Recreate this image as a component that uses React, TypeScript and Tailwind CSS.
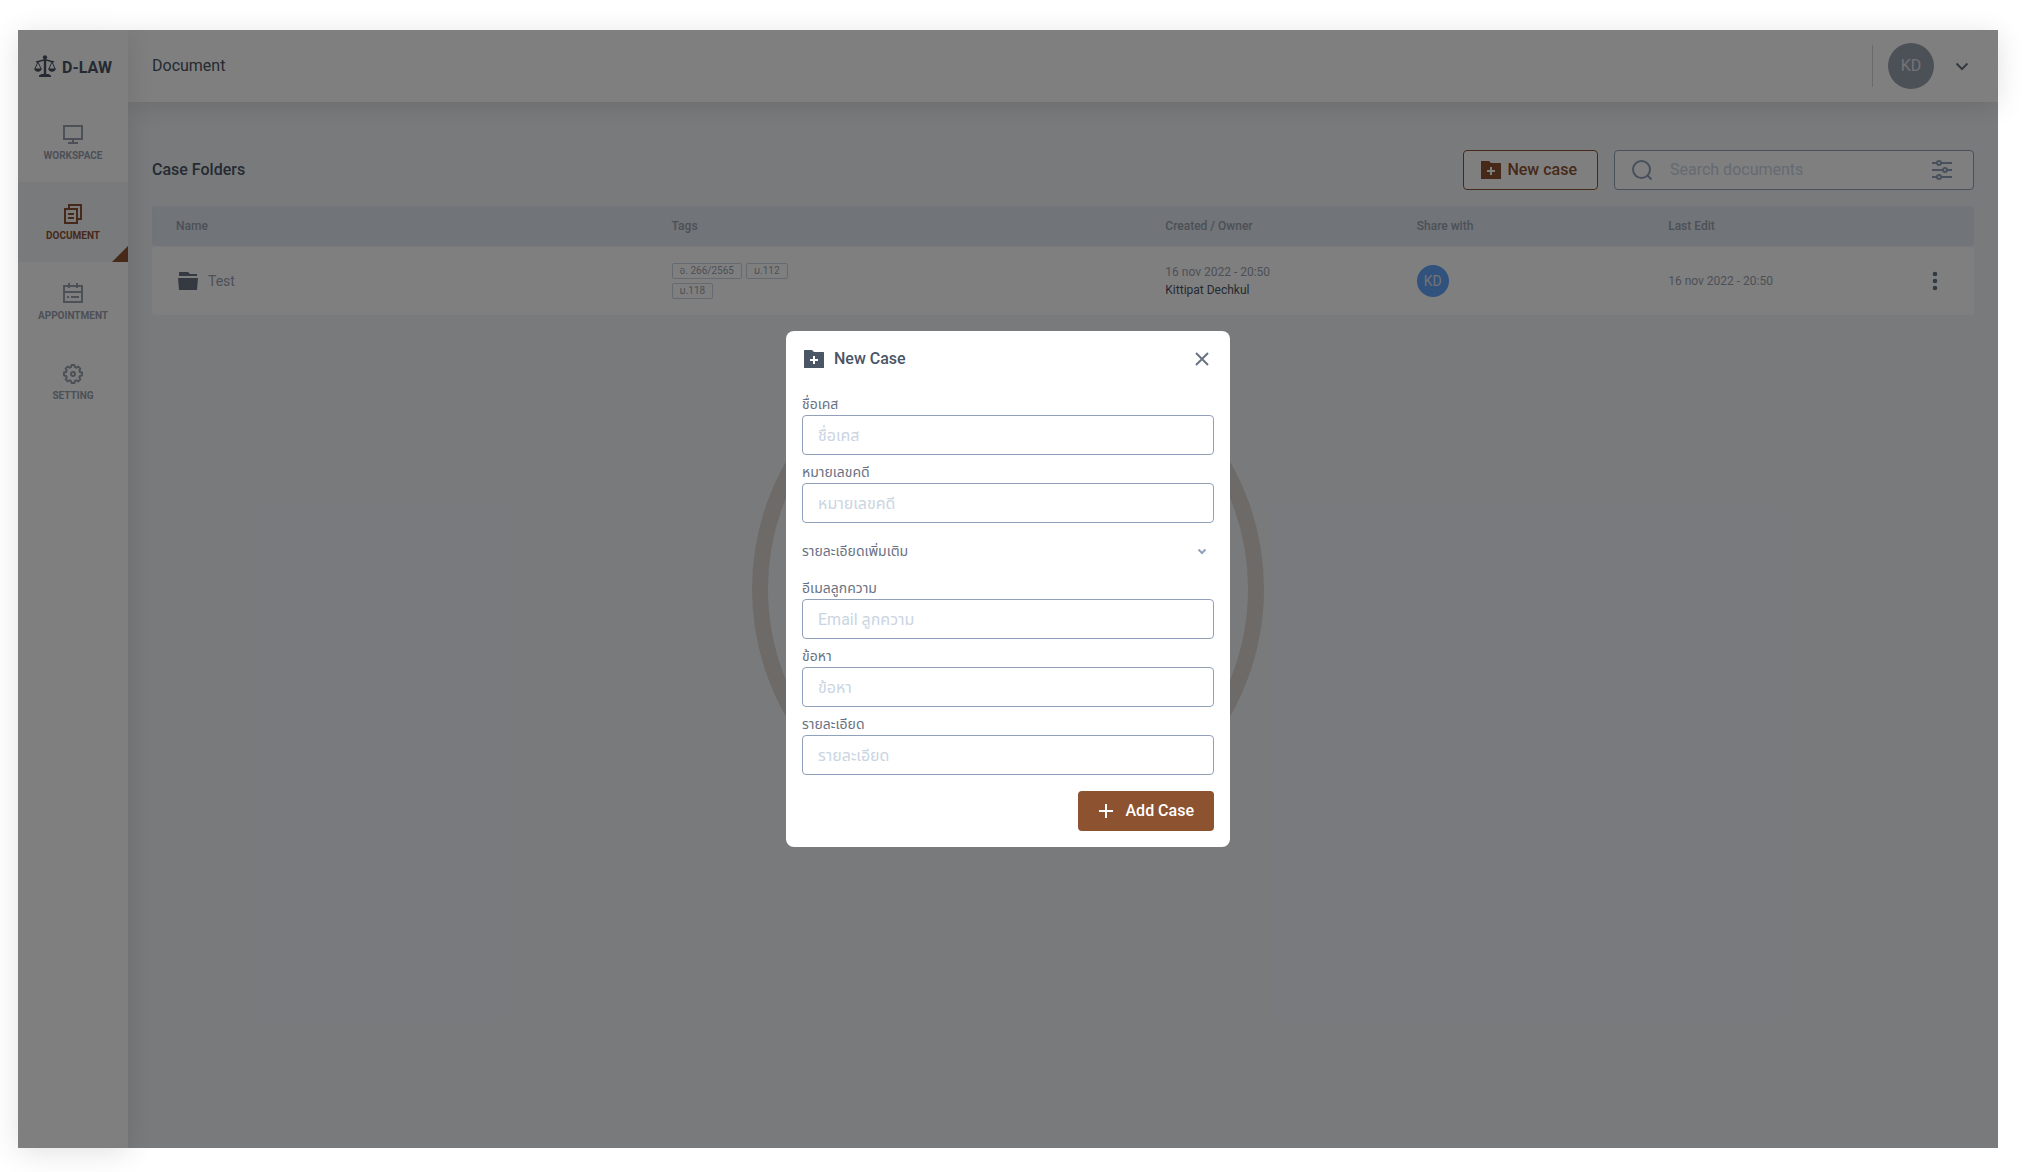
import React from "react";

const font = "font-[Roboto,'Noto_Sans','Noto_Sans_Thai',sans-serif]";

function Icon({ children, className = "" }: { children: React.ReactNode; className?: string }) {
  return (
    <svg width="24" height="24" viewBox="0 0 24 24" fill="none" stroke="currentColor" strokeWidth="2" className={className} aria-hidden="true">
      {children}
    </svg>
  );
}

function ScalesLogo() {
  return (
    <svg width="22" height="22" viewBox="0 0 22 22" fill="none" stroke="currentColor" aria-hidden="true">
      <circle cx="11" cy="2.3" r="2.1" fill="currentColor" stroke="none" />
      <path d="M11 4v15" strokeWidth="2.4" />
      <path d="M2 6.6c3 .6 5-1.6 9-1.6s6 2.2 9 1.6" strokeWidth="1.4" />
      <path d="M4 6.8.9 14M4 6.8 7.1 14M18 6.8 14.9 14M18 6.8l3.1 7.2" strokeWidth="1" />
      <path d="M0 13.6h8c-.4 2-1.9 3.2-4 3.2s-3.600-1.200-4-3.200zM14 13.600h8c-.4 2-1.900 3.200-4 3.200s-3.600-1.200-4-3.200z" fill="currentColor" stroke="none" />
      <path d="M7.500 19h7l2.500 1.600v1.400H5v-1.400z" fill="currentColor" stroke="none" />
    </svg>
  );
}

const gearPath = (() => {
  const points: string[] = [];
  for (let tooth = 0; tooth < 8; tooth++) {
    const base = tooth * 45 - 90;
    const corners: [number, number][] = [[-16, 7.2], [-9, 9.1], [9, 9.1], [16, 7.2]];
    for (const [offset, radius] of corners) {
      const a = ((base + offset) * Math.PI) / 180;
      points.push(`${(12 + radius * Math.cos(a)).toFixed(2)} ${(12 + radius * Math.sin(a)).toFixed(2)}`);
    }
  }
  return `M${points.join("L")}Z`;
})();

const WorkspaceIcon = () => (
  <Icon><path d="M3 4h18v13H3zM12 17v4M7 21h10" /></Icon>
);
const DocumentIcon = () => (
  <Icon><path d="M4 7h12v14H4zM8 7V3h12v14h-4M7 12h6M7 16h6" /></Icon>
);
const AppointmentIcon = () => (
  <Icon><path d="M3 4h18v16H3zM3 10h18M8 1v5M16 1v5M6 15h2M10 15h8" /></Icon>
);
const SettingIcon = () => (
  <Icon>
    <circle cx="12" cy="12" r="2" />
    <path d={gearPath} strokeLinejoin="round" />
  </Icon>
);
const FolderPlusIcon = () => (
  <svg width="24" height="24" viewBox="0 0 24 24" aria-hidden="true" fill="currentColor">
    <path fillRule="evenodd" d="M2 3.500a.5.5 0 0 1 .5-.5H10l2 2h9.500a.5.5 0 0 1 .5.5v15a.5.5 0 0 1-.5.5h-19a.5.5 0 0 1-.5-.5zM11 9v3H8v2h3v3h2v-3h3v-2h-3V9z" />
  </svg>
);

const nav = [
  { label: "WORKSPACE", icon: <WorkspaceIcon />, active: false },
  { label: "DOCUMENT", icon: <DocumentIcon />, active: true },
  { label: "APPOINTMENT", icon: <AppointmentIcon />, active: false },
  { label: "SETTING", icon: <SettingIcon />, active: false },
];

function Sidebar() {
  return (
    <aside className="relative z-10 flex w-[110px] shrink-0 flex-col bg-white shadow-[0_4px_28px_rgba(0,0,0,0.12)]">
      <div className="flex h-[72px] items-center justify-center text-gray-600">
        <div className="flex items-end gap-1.5">
          <ScalesLogo />
          <span className="text-base leading-[18px] font-bold">D-LAW</span>
        </div>
      </div>
      <nav className="flex flex-col">
        {nav.map((item) => (
          <a
            key={item.label}
            href="#"
            aria-current={item.active ? "page" : undefined}
            className={
              item.active
                ? "relative flex h-20 flex-col items-center gap-0.5 bg-slate-100 pt-5 text-[10px] leading-4 font-bold text-[#8d5331]"
                : "relative flex h-20 flex-col items-center gap-0.5 pt-5 text-[10px] leading-4 font-bold text-gray-400"
            }
          >
            {item.icon}
            {item.label}
            {item.active && (
              <svg className="absolute right-0 bottom-0" width="16" height="16" aria-hidden="true">
                <path d="M16 0v16H0z" fill="currentColor" />
              </svg>
            )}
          </a>
        ))}
      </nav>
    </aside>
  );
}

function Header() {
  return (
    <header className="flex h-[72px] items-center justify-between bg-white px-6 shadow-[0_4px_28px_rgba(0,0,0,0.12)]">
      <h1 className="text-base text-gray-600">Document</h1>
      <div className="flex items-center">
        <div className="h-[42px] w-px bg-gray-300" />
        <button type="button" className="ml-[15px] flex items-center gap-4 text-gray-500" aria-label="Account menu">
          <span className="flex size-[46px] items-center justify-center rounded-full bg-gray-400 text-base text-gray-200">KD</span>
          <Icon><path d="m6.500 9.500 5.500 5.500 5.500-5.500" /></Icon>
        </button>
      </div>
    </header>
  );
}

function Toolbar() {
  return (
    <div className="mb-[15px] flex items-center justify-between">
      <h2 className="text-base font-medium text-gray-600">Case Folders</h2>
      <div className="flex gap-4">
        <button type="button" className="flex h-10 items-center gap-1 rounded border border-[#8d5331] bg-white pr-5 pl-[15px] text-base font-medium text-[#8d5331]">
          <FolderPlusIcon />
          New case
        </button>
        <div className="flex h-10 w-[360px] items-center gap-4 rounded border border-slate-400 bg-white pr-[19px] pl-[15px] text-slate-400">
          <Icon className="shrink-0"><circle cx="11.500" cy="11.500" r="8.500" /><path d="m17.500 17.500 4 4" /></Icon>
          <input type="search" aria-label="Search documents" placeholder="Search documents" className="min-w-0 grow text-base outline-none placeholder:text-slate-300" />
          <button type="button" aria-label="Filter">
            <Icon>
              <path d="M2 5h5M11 5h11M2 12h11M17 12h5M2 19h5M11 19h11" />
              <circle cx="9" cy="5" r="2" />
              <circle cx="15" cy="12" r="2" />
              <circle cx="9" cy="19" r="2" />
            </Icon>
          </button>
        </div>
      </div>
    </div>
  );
}

function CaseTable() {
  return (
    <table className="w-full table-fixed border-separate border-spacing-x-0 border-spacing-y-px">
      <colgroup>
        <col className="w-[27.2%]" />
        <col className="w-[27.1%]" />
        <col className="w-[13.8%]" />
        <col className="w-[13.8%]" />
        <col />
      </colgroup>
      <thead>
        <tr className="bg-slate-200 text-left text-xs text-gray-400">
          <th className="h-10 rounded-l pl-6 font-medium">Name</th>
          <th className="h-10 pl-6 font-medium">Tags</th>
          <th className="h-10 pl-6 font-medium">Created / Owner</th>
          <th className="h-10 pl-6 font-medium">Share with</th>
          <th className="h-10 rounded-r pl-6 font-medium">Last Edit</th>
        </tr>
      </thead>
      <tbody>
        <tr className="bg-white text-xs text-gray-400">
          <td className="h-[68px] rounded-l pl-6">
            <div className="flex items-center gap-2">
              <svg className="text-gray-500" width="24" height="24" viewBox="0 0 24 24" fill="currentColor" aria-hidden="true">
                <path d="M3 3h9l2 2h7v2H3zM2 9h20l-1 12H3z" />
              </svg>
              <span className="text-sm">Test</span>
            </div>
          </td>
          <td className="pl-6">
            <div className="flex w-[120px] flex-wrap gap-1 text-[10px] leading-3.5">
              {["อ. 266/2565", "ม.112", "ม.118"].map((t) => (
                <span key={t} className="rounded-xs border border-slate-300 px-[7px]">{t}</span>
              ))}
            </div>
          </td>
          <td className="pl-6 leading-[18px]">
            <div>16 nov 2022 - 20:50</div>
            <div className="text-gray-600">Kittipat Dechkul</div>
          </td>
          <td className="pl-6">
            <span className="flex size-8 items-center justify-center rounded-full bg-[#60a5fa] text-sm text-gray-200">KD</span>
          </td>
          <td className="rounded-r pr-6 pl-6">
            <div className="flex items-center justify-between">
              16 nov 2022 - 20:50
              <button type="button" aria-label="More actions" className="text-slate-500">
                <svg width="30" height="24" viewBox="0 0 30 24" fill="currentColor" aria-hidden="true">
                  <circle cx="15" cy="5" r="2.300" />
                  <circle cx="15" cy="12" r="2.300" />
                  <circle cx="15" cy="19" r="2.300" />
                </svg>
              </button>
            </div>
          </td>
        </tr>
      </tbody>
    </table>
  );
}

function Field({ id, label, placeholder }: { id: string; label: string; placeholder: string }) {
  return (
    <div className="flex flex-col">
      <label htmlFor={id} className="h-5 text-sm leading-[18px] text-gray-500">{label}</label>
      <input id={id} placeholder={placeholder} className="h-10 w-full rounded border border-slate-400 px-[15px] text-base placeholder:text-slate-300" />
    </div>
  );
}

function NewCaseDialog() {
  return (
    <form role="dialog" aria-label="New Case" className="flex w-[444px] flex-col gap-2 rounded-lg bg-white p-4">
      <div className="mb-4 flex h-6 items-center justify-between text-gray-600">
        <div className="flex items-center gap-2">
          <FolderPlusIcon />
          <h2 className="text-base font-medium">New Case</h2>
        </div>
        <button type="button" aria-label="Close" className="text-gray-500">
          <Icon><path d="m6 6 12 12M18 6 6 18" /></Icon>
        </button>
      </div>
      <Field id="name" label="ชื่อเคส" placeholder="ชื่อเคส" />
      <Field id="number" label="หมายเลขคดี" placeholder="หมายเลขคดี" />
      <button type="button" aria-expanded="true" className="flex h-10 items-center justify-between text-sm text-gray-500">
        รายละเอียดเพิ่มเติม
        <Icon className="text-slate-400"><path d="m8.500 10.500 3.500 3.500 3.500-3.500" /></Icon>
      </button>
      <Field id="email" label="อีเมลลูกความ" placeholder="Email ลูกความ" />
      <Field id="charge" label="ข้อหา" placeholder="ข้อหา" />
      <Field id="detail" label="รายละเอียด" placeholder="รายละเอียด" />
      <button type="submit" className="mt-2 flex h-10 items-center gap-2 self-end rounded bg-[#8d5331] pr-5 pl-4 text-base font-medium text-white">
        <Icon><path d="M12 5v14M5 12h14" /></Icon>
        Add Case
      </button>
    </form>
  );
}

export default function App() {
  return (
    <div className={font + " min-h-screen bg-white pt-[30px] pr-[34px] pb-6 pl-[18px]"}>
      <div className="relative flex min-h-[calc(100vh-54px)] bg-slate-100">
        <Sidebar />
        <div className="flex min-w-0 grow flex-col">
          <Header />
          <main className="px-6 pt-12">
            <Toolbar />
            <CaseTable />
          </main>
        </div>
        <div className="absolute inset-0 z-20 grid place-items-center">
          <div className="col-start-1 row-start-1 size-[512px] rounded-full border-16 border-[#8d5331]/20" />
          <div className="col-start-1 row-start-1 flex size-full items-center justify-center bg-black/50">
            <NewCaseDialog />
          </div>
        </div>
      </div>
    </div>
  );
}
